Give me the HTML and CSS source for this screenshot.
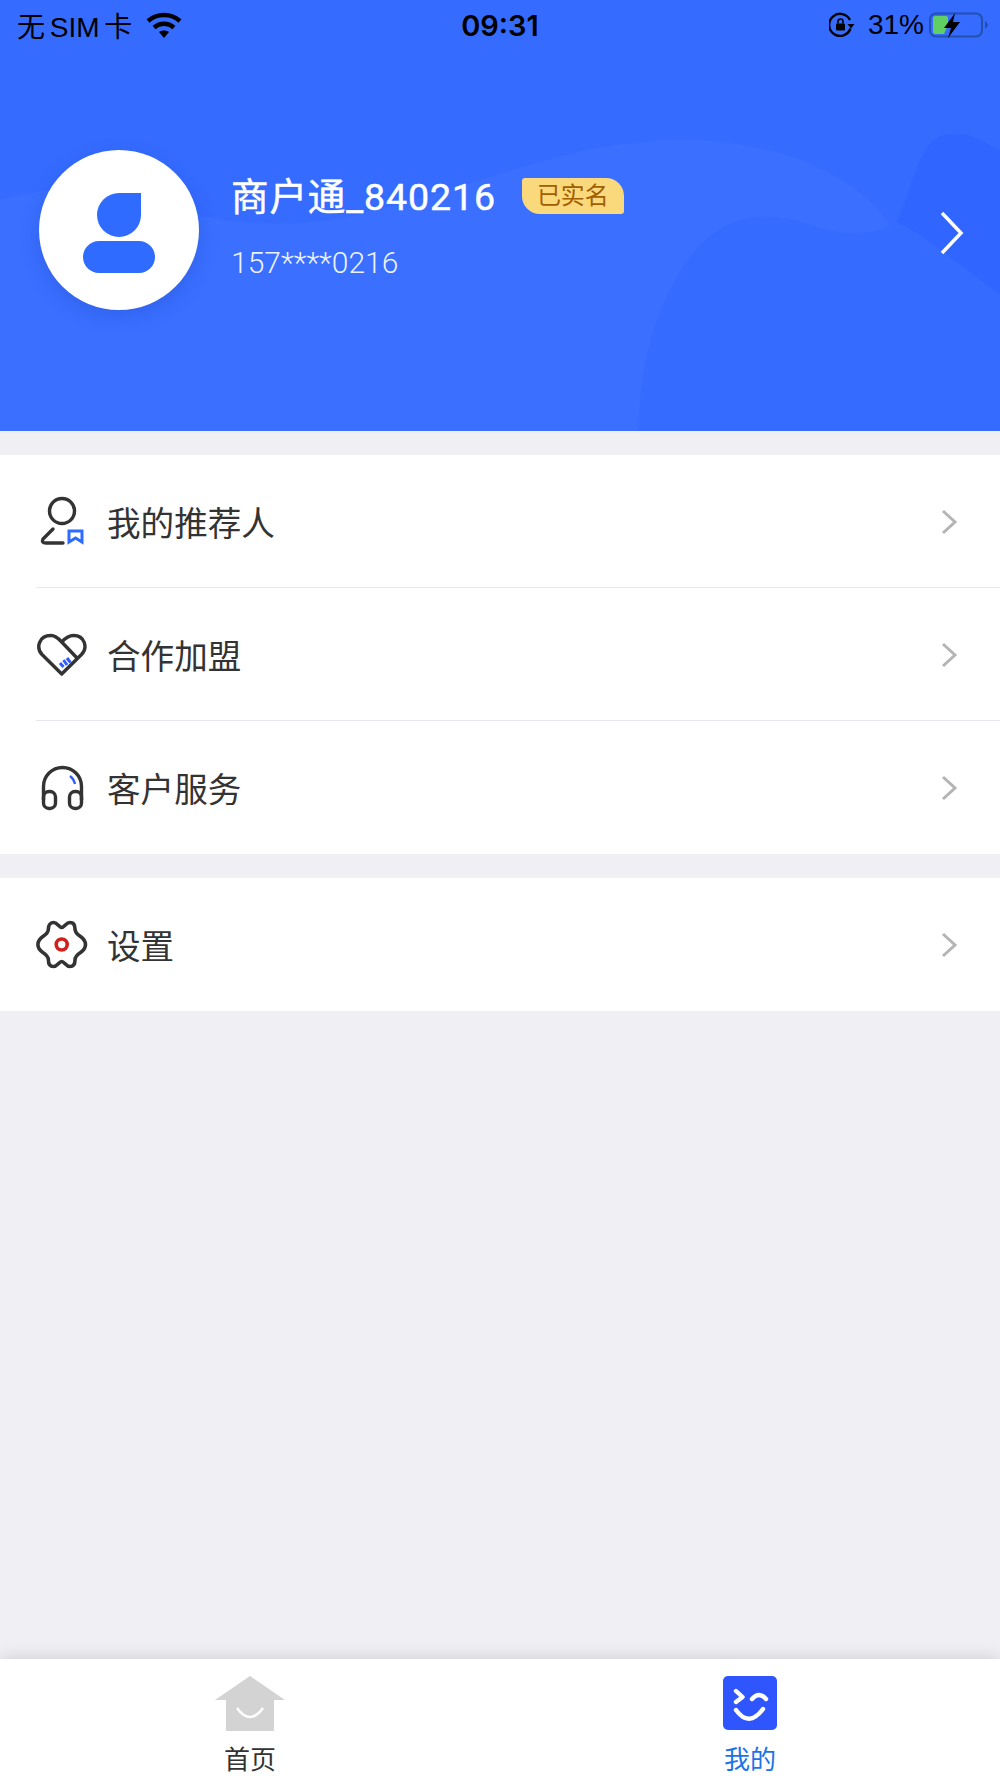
FILE: index.html
```html
<!DOCTYPE html>
<html lang="zh">
<head>
    <meta charset="UTF-8">
    <meta name="viewport" content="width=device-width, initial-scale=1.0">
    <title>我的</title>
    <link rel="stylesheet" href="styles.css">
</head>
<body>
    <div class="page">
        <!-- 顶部用户信息 -->
        <header class="profile">
            <svg class="profile-bg" viewBox="0 0 1000 431" preserveAspectRatio="none">
                <path d="M0 200 C120 165 170 240 330 220 C480 190 560 140 680 140 C790 140 860 180 890 225 C860 240 830 232 800 222 C740 205 700 230 670 290 C645 340 640 390 638 431 L0 431 Z" fill="#3a6fff"/>
                <path d="M897 222 C915 180 920 140 945 135 C975 130 985 145 1000 150 L1000 295 C960 265 925 235 897 222 Z" fill="#3065ff"/>
            </svg>
            <div class="status-bar">
                <div class="status-left">
                    <span class="carrier">无 SIM 卡</span>
                    <svg class="wifi" width="38" height="28" viewBox="0 0 38 28">
                        <path d="M3 10 C12 2 26 2 35 10" fill="none" stroke="#000" stroke-width="4.5"/>
                        <path d="M9 16.5 C15 11.5 23 11.5 29 16.5" fill="none" stroke="#000" stroke-width="4.5"/>
                        <path d="M14 21 C17 19 21 19 24 21 L19 27 Z" fill="#000"/>
                    </svg>
                </div>
                <div class="status-time">09:31</div>
                <div class="status-right">
                    <svg width="26" height="28" viewBox="0 0 26 28">
                        <path d="M21.5 17.5 A11 11 0 1 1 21 9" fill="none" stroke="#000" stroke-width="2.4"/>
                        <path d="M18.5 13 L25.5 13 L22 17.5 Z" fill="#000"/>
                        <rect x="7" y="12.5" width="9" height="7" rx="1" fill="#000"/>
                        <path d="M9 12.5 V10.5 A2.5 2.5 0 0 1 14 10.5 V12.5" fill="none" stroke="#000" stroke-width="1.6"/>
                    </svg>
                    <span class="battery-text">31%</span>
                    <svg width="60" height="28" viewBox="0 0 60 28">
                        <rect x="1" y="2.5" width="52" height="23" rx="6" fill="none" stroke="#2450ad" stroke-width="2"/>
                        <path d="M4 7 Q4 5 6 5 L17 5 Q19 5 19 7 L19 14 L15 23 L6 23 Q4 23 4 21 Z" fill="#5fcf63"/>
                        <path d="M26 2 L15 17 L22 17 L19 27 L31 11 L24 11 Z" fill="#000"/>
                        <path d="M56 10 Q59 12 59 14 Q59 16 56 18 Z" fill="#2450ad"/>
                    </svg>
                </div>
            </div>
            <div class="profile-main">
                <div class="avatar">
                    <svg width="72" height="80" viewBox="0 0 72 80">
                        <path d="M36 0 L58 0 L58 22 A22 22 0 0 1 14 22 A22 22 0 0 1 36 0 Z" fill="#2f6bff"/>
                        <rect x="0" y="48" width="72" height="32" rx="16" fill="#2f6bff"/>
                    </svg>
                </div>
                <div class="profile-info">
                    <div class="name-row">
                        <span class="name">商户通_840216</span>
                        <span class="badge">已实名</span>
                    </div>
                    <div class="phone">157****0216</div>
                </div>
                <svg class="profile-arrow" width="24" height="44" viewBox="0 0 24 44">
                    <path d="M2 2 L21 22 L2 42" fill="none" stroke="#fff" stroke-width="3.5"/>
                </svg>
            </div>
        </header>

        <!-- 菜单 -->
        <div class="menu">
            <div class="menu-item">
                <svg class="menu-icon" width="52" height="52" viewBox="0 0 52 52">
                    <circle cx="26" cy="16" r="12.5" fill="none" stroke="#333" stroke-width="3.4"/>
                    <path d="M17 34 L7 44 Q5 48 10 48 L27 48" fill="none" stroke="#333" stroke-width="3.4" stroke-linecap="round"/>
                    <path d="M33 36 L46 36 L46 47 L39.5 43 L33 47 Z" fill="none" stroke="#2f6bff" stroke-width="3"/>
                </svg>
                <span class="menu-text">我的推荐人</span>
                <svg class="chevron" width="17" height="26" viewBox="0 0 17 26">
                    <path d="M2 2 L14 13 L2 24" fill="none" stroke="#b4b4b4" stroke-width="3"/>
                </svg>
            </div>
            <div class="menu-item">
                <svg class="menu-icon" width="52" height="52" viewBox="0 0 52 52">
                    <path d="M25.7 46 L6 26.5 C0 20 2.5 7.5 15 7.5 C20 7.5 23 11 25.7 14 C28.5 11 32 7.5 37.5 7.5 C49 7.5 52 20 45.5 26.5 Z M25.7 14 L41 30" fill="none" stroke="#333" stroke-width="3.4" stroke-linejoin="round"/>
                    <path d="M24 35 L27.5 39 M27.5 32 L31 37 M31 30 L34.5 34.7" fill="none" stroke="#2f5bff" stroke-width="3"/>
                </svg>
                <span class="menu-text">合作加盟</span>
                <svg class="chevron" width="17" height="26" viewBox="0 0 17 26">
                    <path d="M2 2 L14 13 L2 24" fill="none" stroke="#b4b4b4" stroke-width="3"/>
                </svg>
            </div>
            <div class="menu-item">
                <svg class="menu-icon" width="52" height="52" viewBox="0 0 52 52">
                    <path d="M7.5 38 V24.5 A19 19 0 0 1 45.5 24.5 V38" fill="none" stroke="#333" stroke-width="3.4"/>
                    <rect x="7.5" y="29.5" width="12" height="17" rx="5.5" fill="none" stroke="#333" stroke-width="3.4"/>
                    <rect x="33.5" y="29.5" width="12" height="17" rx="5.5" fill="none" stroke="#333" stroke-width="3.4"/>
                    <path d="M34 14 Q38 17 39 22" fill="none" stroke="#2f5bff" stroke-width="2.2"/>
                </svg>
                <span class="menu-text">客户服务</span>
                <svg class="chevron" width="17" height="26" viewBox="0 0 17 26">
                    <path d="M2 2 L14 13 L2 24" fill="none" stroke="#b4b4b4" stroke-width="3"/>
                </svg>
            </div>
        </div>

        <div class="menu">
            <div class="menu-item">
                <svg class="menu-icon" width="52" height="52" viewBox="0 0 52 52">
                    <path d="M25.7 8.5 C28.5 8.5 30 3.5 34 3.5 C37.5 3.5 39 6.5 39 10 C39 13.5 41.5 15.5 44.5 17.5 C48 20 49.5 23 49.5 25.5 C49.5 28 48 31 44.5 33.5 C41.5 35.5 39 37.5 39 41 C39 44.5 37.5 47.5 34 47.5 C30 47.5 28.5 42.5 25.7 42.5 C22.9 42.5 21.4 47.5 17.4 47.5 C13.9 47.5 12.4 44.5 12.4 41 C12.4 37.5 9.9 35.5 6.9 33.5 C3.4 31 1.9 28 1.9 25.5 C1.9 23 3.4 20 6.9 17.5 C9.9 15.5 12.4 13.5 12.4 10 C12.4 6.5 13.9 3.5 17.4 3.5 C21.4 3.5 22.9 8.5 25.7 8.5 Z" fill="none" stroke="#333" stroke-width="3.6"/>
                    <circle cx="25.7" cy="25.5" r="5.5" fill="none" stroke="#d0201c" stroke-width="3.6"/>
                </svg>
                <span class="menu-text">设置</span>
                <svg class="chevron" width="17" height="26" viewBox="0 0 17 26">
                    <path d="M2 2 L14 13 L2 24" fill="none" stroke="#b4b4b4" stroke-width="3"/>
                </svg>
            </div>
        </div>

        <div class="spacer"></div>

        <!-- 底部导航 -->
        <nav class="tabbar">
            <div class="tab">
                <svg width="72" height="55" viewBox="0 0 72 55">
                    <path d="M36 0 L71 24 L60 24 L60 55 L12 55 L12 24 L1 24 Z" fill="#d3d3d3"/>
                    <path d="M23 32 Q36 50 49 32" fill="none" stroke="#fff" stroke-width="2.5"/>
                </svg>
                <span class="tab-label">首页</span>
            </div>
            <div class="tab tab-active">
                <svg width="54" height="55" viewBox="0 0 54 55">
                    <rect width="54" height="54" rx="5" fill="#2f55ff"/>
                    <path d="M13 15 L19.5 21 L13 26 M29 23 Q36 15 43 23 M13 34 Q26 52 40 33" fill="none" stroke="#fff" stroke-width="4.4" stroke-linecap="round" stroke-linejoin="round"/>
                </svg>
                <span class="tab-label">我的</span>
            </div>
        </nav>
    </div>
</body>
</html>
```

FILE: styles.css
```css
* {
    box-sizing: border-box;
}
html, body {
    margin: 0;
    padding: 0;
}
body {
    font-family: "Liberation Sans", "Noto Sans CJK SC", sans-serif;
    background-color: #efeff4;
}
.page {
    height: 1778px;
    display: flex;
    flex-direction: column;
}
.profile {
    position: relative;
    height: 431px;
    background-color: #356bff;
    overflow: hidden;
}
.profile-bg {
    position: absolute;
    left: 0;
    top: 0;
    width: 100%;
    height: 100%;
}
.status-bar {
    position: relative;
    display: flex;
    align-items: center;
    justify-content: space-between;
    height: 50px;
    padding: 0 11px 0 17px;
    color: #000;
    font-size: 28px;
}
.status-left, .status-right {
    display: flex;
    align-items: center;
    width: 240px;
}
.status-left {
    gap: 13px;
}
.carrier {
    word-spacing: -3px;
}
.status-right {
    justify-content: flex-end;
    gap: 13px;
}
.battery-text {
    margin-right: -8px;
    font-size: 28px;
}
.status-time {
    margin-left: -6px;
    font-family: Inter, sans-serif;
    font-weight: 600;
    font-size: 29px;
}
.profile-main {
    position: relative;
    display: flex;
    align-items: flex-start;
    padding: 100px 36px 0 39px;
}
.avatar {
    width: 160px;
    height: 160px;
    flex-shrink: 0;
    display: flex;
    align-items: center;
    justify-content: center;
    padding-top: 5px;
    background-color: #fff;
    border-radius: 50%;
    box-shadow: 0 6px 18px rgba(30, 70, 190, 0.3);
}
.profile-info {
    flex: 1;
    margin-left: 32px;
    padding-top: 24px;
}
.name-row {
    display: flex;
    align-items: center;
    height: 46px;
}
.name {
    margin-top: -7px;
    color: #fff;
    font-family: Roboto, "Noto Sans CJK SC", sans-serif;
    font-size: 37.5px;
    font-weight: 400;
    letter-spacing: 0.9px;
    -webkit-text-stroke: 0.5px #fff;
}
.badge {
    width: 102px;
    height: 36px;
    margin-left: 26px;
    margin-top: -3px;
    line-height: 36px;
    text-align: center;
    color: #a05f00;
    font-size: 24px;
    background-color: #fad97c;
    border-radius: 3px 18px 3px 18px;
}
.phone {
    margin-top: 25px;
    color: rgba(255, 255, 255, 0.92);
    font-family: Roboto, sans-serif;
    font-size: 30px;
    font-weight: 300;
    line-height: 36px;
}
.profile-arrow {
    margin-top: 61px;
}
.menu {
    margin-top: 24px;
    padding-left: 36px;
    background-color: #fff;
}
.menu-item {
    display: flex;
    align-items: center;
    height: 133px;
    padding-right: 42px;
    border-bottom: 1px solid #e8e8ec;
}
.menu-item:last-child {
    border-bottom: none;
}
.menu-icon {
    flex-shrink: 0;
    margin-right: 19px;
}
.menu-text {
    flex: 1;
    color: #333;
    font-size: 33.6px;
}
.chevron {
    margin-top: 1px;
}
.spacer {
    flex: 1;
}
.tabbar {
    display: flex;
    height: 119px;
    background-color: #fff;
    box-shadow: 0 -4px 14px rgba(0, 0, 0, 0.1);
}
.tab {
    flex: 1;
    display: flex;
    flex-direction: column;
    align-items: center;
    padding-top: 17px;
}
.tab-label {
    margin-top: 12px;
    color: #333;
    font-size: 26px;
    line-height: 34px;
}
.tab-active .tab-label {
    color: #1a73e8;
}
```
